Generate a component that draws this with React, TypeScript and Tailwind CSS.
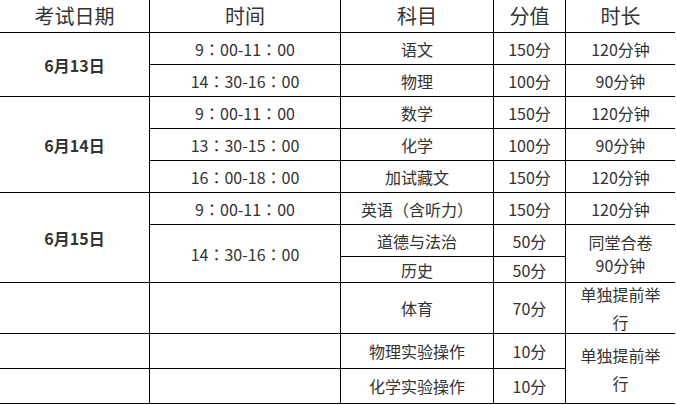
import React from "react";

type CellProps = {
  className?: string;
  children?: React.ReactNode;
  first?: boolean;
};

function Cell({ className = "", children, first }: CellProps) {
  return (
    <div
      className={
        "flex items-center justify-center text-center border-b border-black " +
        (first ? "" : "border-l ") +
        className
      }
    >
      {children}
    </div>
  );
}

function P({ c }: { c: string }) {
  return <span className="font-['Noto_Sans_CJK_TC',sans-serif]">{c}</span>;
}

function Time({ a, b, c, d }: { a: string; b: string; c: string; d: string }) {
  return (
    <span>
      {a}
      <P c="：" />
      {b}-{c}
      <P c="：" />
      {d}
    </span>
  );
}

export default function App() {
  return (
    <div className="w-[676px] h-[405px] bg-white overflow-hidden font-['Noto_Sans_CJK_SC','Noto_Sans',sans-serif] text-[#333] text-[16px] leading-[28px]">
      <div className="grid grid-cols-[149px_191px_153px_72px_110px] grid-rows-[33px_32px_32px_32px_32px_32px_32px_32px_26px_51px_35px_35px]">
        {/* header */}
        <Cell first className="text-[20px] col-start-1 row-start-1">考试日期</Cell>
        <Cell className="text-[20px] col-start-2 row-start-1">时间</Cell>
        <Cell className="text-[20px] col-start-3 row-start-1">科目</Cell>
        <Cell className="text-[20px] col-start-4 row-start-1">分值</Cell>
        <Cell className="text-[20px] col-start-5 row-start-1">时长</Cell>

        {/* 6月13日 */}
        <Cell first className="font-bold col-start-1 row-start-2 row-span-2">6月13日</Cell>
        <Cell className="col-start-2 row-start-2"><Time a="9" b="00" c="11" d="00" /></Cell>
        <Cell className="col-start-3 row-start-2">语文</Cell>
        <Cell className="col-start-4 row-start-2">150分</Cell>
        <Cell className="col-start-5 row-start-2">120分钟</Cell>
        <Cell className="col-start-2 row-start-3"><Time a="14" b="30" c="16" d="00" /></Cell>
        <Cell className="col-start-3 row-start-3">物理</Cell>
        <Cell className="col-start-4 row-start-3">100分</Cell>
        <Cell className="col-start-5 row-start-3">90分钟</Cell>

        {/* 6月14日 */}
        <Cell first className="font-bold col-start-1 row-start-4 row-span-3">6月14日</Cell>
        <Cell className="col-start-2 row-start-4"><Time a="9" b="00" c="11" d="00" /></Cell>
        <Cell className="col-start-3 row-start-4">数学</Cell>
        <Cell className="col-start-4 row-start-4">150分</Cell>
        <Cell className="col-start-5 row-start-4">120分钟</Cell>
        <Cell className="col-start-2 row-start-5"><Time a="13" b="30" c="15" d="00" /></Cell>
        <Cell className="col-start-3 row-start-5">化学</Cell>
        <Cell className="col-start-4 row-start-5">100分</Cell>
        <Cell className="col-start-5 row-start-5">90分钟</Cell>
        <Cell className="col-start-2 row-start-6"><Time a="16" b="00" c="18" d="00" /></Cell>
        <Cell className="col-start-3 row-start-6">加试藏文</Cell>
        <Cell className="col-start-4 row-start-6">150分</Cell>
        <Cell className="col-start-5 row-start-6">120分钟</Cell>

        {/* 6月15日 */}
        <Cell first className="font-bold col-start-1 row-start-7 row-span-3">6月15日</Cell>
        <Cell className="col-start-2 row-start-7"><Time a="9" b="00" c="11" d="00" /></Cell>
        <Cell className="col-start-3 row-start-7">
          <span>
            英语<P c="（" />含听力<P c="）" />
          </span>
        </Cell>
        <Cell className="col-start-4 row-start-7">150分</Cell>
        <Cell className="col-start-5 row-start-7">120分钟</Cell>
        <Cell className="col-start-2 row-start-8 row-span-2"><Time a="14" b="30" c="16" d="00" /></Cell>
        <Cell className="col-start-3 row-start-8">道德与法治</Cell>
        <Cell className="col-start-4 row-start-8">50分</Cell>
        <Cell className="col-start-5 row-start-8 row-span-2 leading-[23px]">
          同堂合卷
          <br />
          90分钟
        </Cell>
        <Cell className="col-start-3 row-start-9">历史</Cell>
        <Cell className="col-start-4 row-start-9">50分</Cell>

        {/* 体育 */}
        <Cell first className="col-start-1 row-start-10" />
        <Cell className="col-start-2 row-start-10" />
        <Cell className="col-start-3 row-start-10">体育</Cell>
        <Cell className="col-start-4 row-start-10">70分</Cell>
        <Cell className="col-start-5 row-start-10">
          单独提前举
          <br />
          行
        </Cell>

        {/* 实验操作 */}
        <Cell first className="col-start-1 row-start-11" />
        <Cell className="col-start-2 row-start-11" />
        <Cell className="col-start-3 row-start-11">物理实验操作</Cell>
        <Cell className="col-start-4 row-start-11">10分</Cell>
        <Cell className="col-start-5 row-start-11 row-span-2">
          单独提前举
          <br />
          行
        </Cell>
        <Cell first className="col-start-1 row-start-12" />
        <Cell className="col-start-2 row-start-12" />
        <Cell className="col-start-3 row-start-12">化学实验操作</Cell>
        <Cell className="col-start-4 row-start-12">10分</Cell>
      </div>
    </div>
  );
}
